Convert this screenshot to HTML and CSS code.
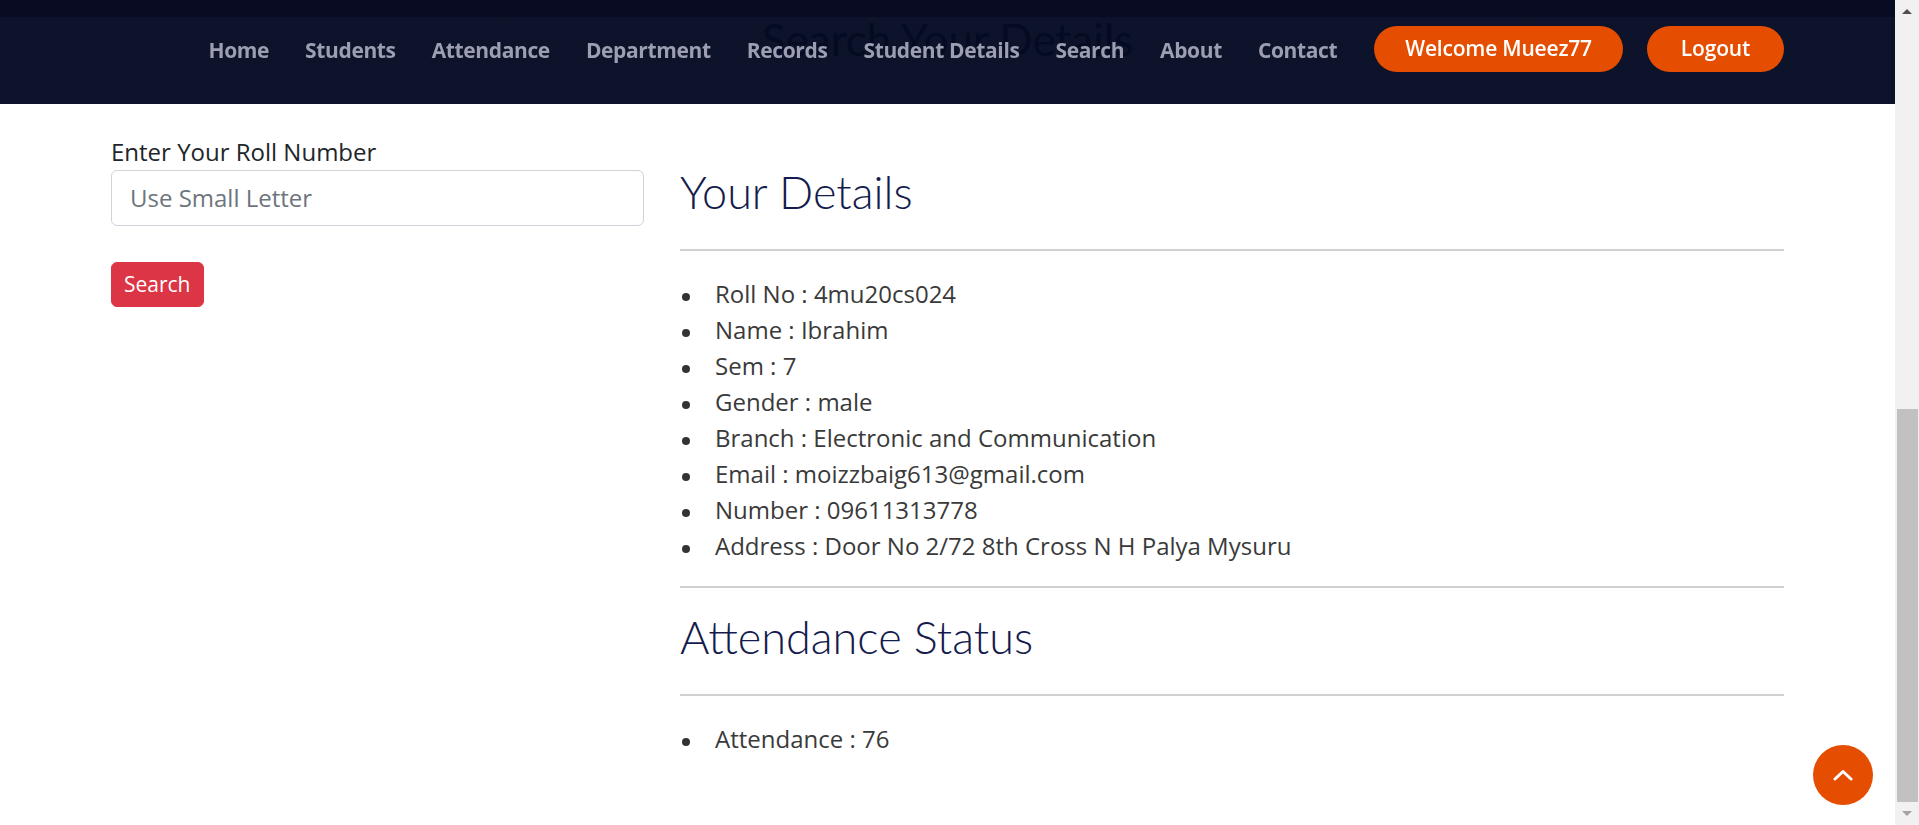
FILE: index.html
```html
<!DOCTYPE html>
<html lang="en">
<head>
<meta charset="utf-8">
<title>Search Your Details</title>
<link rel="stylesheet" href="styles.css">
</head>
<body>
<div class="app">
  <div class="viewport">
    <header class="header">
      <div class="header-inner">
        <nav class="nav">
          <a class="nav-link" href="#">Home</a>
          <a class="nav-link" href="#">Students</a>
          <a class="nav-link" href="#">Attendance</a>
          <a class="nav-link" href="#">Department</a>
          <a class="nav-link" href="#">Records</a>
          <a class="nav-link" href="#">Student Details</a>
          <a class="nav-link" href="#">Search</a>
          <a class="nav-link" href="#">About</a>
          <a class="nav-link" href="#">Contact</a>
          <a class="pill" href="#">Welcome Mueez77</a>
          <a class="pill pill-logout" href="#">Logout</a>
        </nav>
      </div>
    </header>

    <main class="page">
      <h1 class="page-title">Search Your Details</h1>
      <div class="layout">
        <form class="search-form">
          <label class="form-label" for="roll">Enter Your Roll Number</label>
          <input class="form-input" id="roll" type="text" placeholder="Use Small Letter">
          <button class="search-btn" type="button">Search</button>
        </form>
        <section class="details">
          <h2 class="details-title first">Your Details</h2>
          <hr class="rule rule-head">
          <ul class="info-list">
            <li>Roll No : 4mu20cs024</li>
            <li>Name : Ibrahim</li>
            <li>Sem : 7</li>
            <li>Gender : male</li>
            <li>Branch : Electronic and Communication</li>
            <li>Email : moizzbaig613@gmail.com</li>
            <li>Number : 09611313778</li>
            <li>Address : Door No 2/72 8th Cross N H Palya Mysuru</li>
          </ul>
          <hr class="rule rule-list">
          <h2 class="details-title">Attendance Status</h2>
          <hr class="rule rule-head">
          <ul class="info-list">
            <li>Attendance : 76</li>
          </ul>
        </section>
      </div>
    </main>

    <a class="back-to-top" href="#">
      <svg width="20" height="12" viewBox="0 0 20 12"><polyline points="2,10 10,2.5 18,10" fill="none" stroke="#fff" stroke-width="3" stroke-linecap="round" stroke-linejoin="round"/></svg>
    </a>
  </div>
  <div class="scrollbar">
    <div class="sb-btn sb-up"></div>
    <div class="sb-track"><div class="sb-thumb"></div></div>
    <div class="sb-btn sb-down"></div>
  </div>
</div>
</body>
</html>
```

FILE: styles.css
```css
html, body {
  margin: 0;
  height: 100%;
  overflow: hidden;
}

body {
  font-family: "Open Sans", "Liberation Sans", sans-serif;
  font-size: 24px;
  line-height: 1.5;
  color: #444444;
  background: #ffffff;
}

.app {
  display: flex;
  height: 100vh;
}

.viewport {
  flex: 1;
  min-width: 0;
  overflow: hidden;
}

/* header */
.header {
  position: fixed;
  top: 0;
  left: 0;
  right: 24px;
  height: 104px;
  z-index: 10;
  background: linear-gradient(to bottom,
    rgba(0, 4, 28, 0.97) 0,
    rgba(0, 4, 28, 0.97) 17px,
    rgba(4, 11, 35, 0.97) 17px,
    rgba(4, 11, 35, 0.97) 100%);
}

.header-inner {
  display: flex;
  justify-content: flex-end;
  align-items: center;
  padding: 26px 111px 0;
}

.nav {
  display: flex;
  align-items: center;
  height: 46px;
}

.nav-link {
  font-family: "Open Sans", sans-serif;
  font-weight: 700;
  font-size: 21px;
  letter-spacing: -0.37px;
  line-height: 44px;
  padding-top: 2px;
  color: #9c9fb2;
  text-decoration: none;
}

.nav-link + .nav-link {
  margin-left: 36px;
}

.pill {
  display: flex;
  align-items: center;
  height: 46px;
  margin-left: 37px;
  padding: 0 31px;
  border-radius: 23px;
  background: #e54d00;
  color: #ffffff;
  font-family: "Open Sans", sans-serif;
  font-weight: 600;
  font-size: 21px;
  letter-spacing: -0.2px;
  text-decoration: none;
}

.pill + .pill {
  margin-left: 24px;
}

.pill-logout {
  padding: 0 34px;
}

/* page */
.page {
  padding: 0 111px;
}

.page-title {
  margin: 0;
  padding-top: 13px;
  text-align: center;
  font-family: Lato, sans-serif;
  font-weight: 400;
  font-size: 44px;
  line-height: 1.2;
  color: #000000;
}

.layout {
  display: grid;
  grid-template-columns: 533px 1fr;
  column-gap: 36px;
  margin-top: 68px;
  align-items: start;
}

.form-label {
  display: block;
  color: #212529;
  line-height: 36px;
}

.form-input {
  display: block;
  width: 100%;
  box-sizing: border-box;
  height: 56px;
  padding: 9px 18px;
  font-family: "Open Sans", sans-serif;
  font-size: 24px;
  color: #495057;
  border: 1px solid #ced4da;
  border-radius: 6px;
  background: #fff;
}

.form-input::placeholder {
  color: #6c757d;
}

.search-btn {
  display: block;
  margin-top: 36px;
  padding: 6px 12px;
  font-family: "Open Sans", sans-serif;
  font-size: 21px;
  line-height: 1.5;
  color: #fff;
  background: #dc3545;
  border: 1px solid #dc3545;
  border-radius: 6px;
}

.details-title {
  margin: 0;
  font-family: Lato, sans-serif;
  font-weight: 300;
  font-size: 45px;
  line-height: 1.2;
  color: #141b4d;
}

.details-title.first {
  margin-top: 31px;
}

.rule {
  height: 0;
  border: 0;
  border-top: 2px solid #d0d0d0;
}

.rule-head {
  margin: 30px 0 25px;
}

.rule-list {
  margin: 22px 0 22px;
}

.info-list {
  margin: 0;
  padding-left: 0;
  list-style: none;
  line-height: 36px;
  color: #3a3a3a;
}

.info-list li {
  display: flex;
}

.info-list li::before {
  content: "";
  flex: none;
  width: 8px;
  height: 8px;
  margin: 17px 25px 0 2px;
  border-radius: 50%;
  background: #333333;
}

/* back to top */
.back-to-top {
  position: fixed;
  right: 46px;
  bottom: 20px;
  width: 60px;
  height: 60px;
  border-radius: 50%;
  background: #e54d00;
  display: flex;
  align-items: center;
  justify-content: center;
}

/* fake scrollbar */
.scrollbar {
  width: 24px;
  flex: none;
  background: #f1f1f1;
  display: flex;
  flex-direction: column;
}

.sb-btn {
  height: 23px;
  display: flex;
  align-items: center;
  justify-content: center;
}

.sb-up::before {
  content: "";
  border-left: 5px solid transparent;
  border-right: 5px solid transparent;
  border-bottom: 5px solid #505050;
}

.sb-down::before {
  content: "";
  border-left: 5px solid transparent;
  border-right: 5px solid transparent;
  border-top: 5px solid #a3a3a3;
}

.sb-track {
  flex: 1;
  display: flex;
  flex-direction: column;
  justify-content: flex-end;
  padding: 0 1px 0 2px;
}

.sb-thumb {
  height: 393px;
  background: #c1c1c1;
}
```
